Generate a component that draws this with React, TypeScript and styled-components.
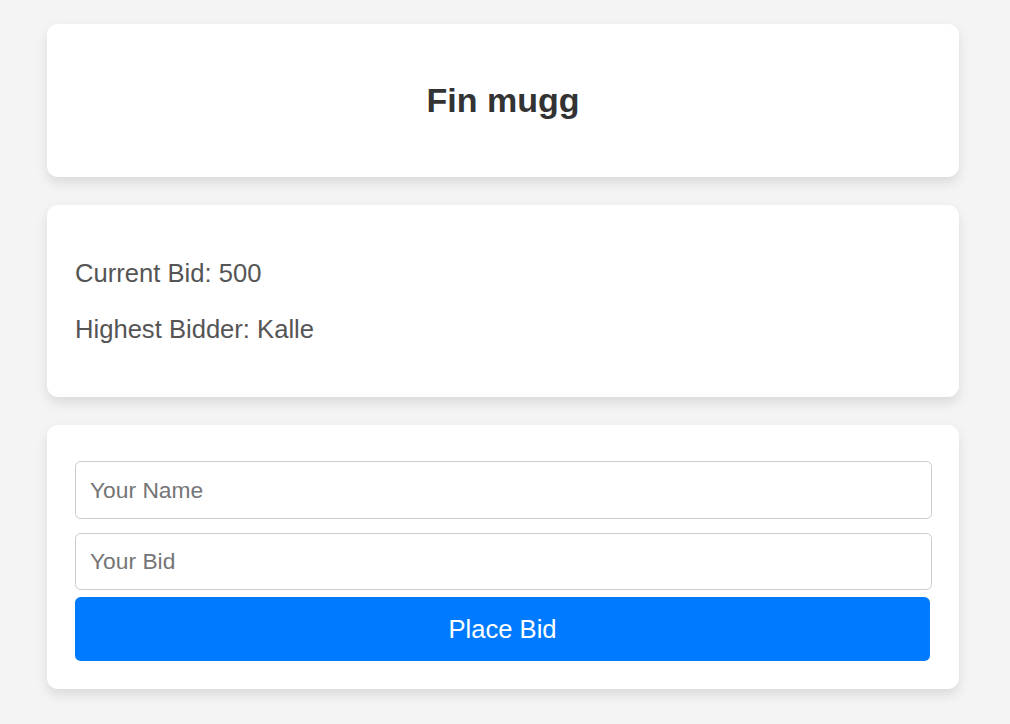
import React from "react";
import styled, { createGlobalStyle } from "styled-components";

const Global = createGlobalStyle`
  html, body { margin: 0; padding: 0; background: #f4f4f4; }
  body { font-family: "Liberation Sans", Arial, sans-serif; }
  * { box-sizing: border-box; }
`;

const Page = styled.div`
  width: 912px;
  margin-left: 47px;
  padding: 24px 0;
  display: flex;
  flex-direction: column;
  gap: 28px;
`;

const Card = styled.section`
  background: #fff;
  border-radius: 11.2px;
  box-shadow: 0 5.6px 11.2px rgba(0, 0, 0, 0.1);
  padding: 28px;
`;

const Title = styled.h2`
  margin: 28px 0;
  font-size: 34px;
  line-height: 41px;
  font-weight: bold;
  color: #333;
  text-align: center;
`;

const Info = styled.p`
  margin: 25.2px 0;
  font-size: 25.6px;
  line-height: 30.4px;
  color: #555;
`;

const Form = styled.form`
  display: flex;
  flex-direction: column;
  padding-top: 8px;
`;

const Input = styled.input<{ $h: number; $mb: number }>`
  width: 857px;
  height: ${(p) => p.$h}px;
  margin: 0 0 ${(p) => p.$mb}px 0;
  padding: 0 14px;
  font-family: "Liberation Sans", Arial, sans-serif;
  font-size: 22.8px;
  color: #333;
  border: 1.4px solid #ccc;
  border-radius: 5.6px;
  outline: none;
  &::placeholder { color: #757575; }
`;

const Button = styled.button`
  width: 855px;
  height: 64px;
  border: none;
  border-radius: 5.6px;
  background: #007bff;
  color: #fff;
  font-family: "Liberation Sans", Arial, sans-serif;
  font-size: 25.6px;
  cursor: pointer;
`;

export default function App() {
  return (
    <>
      <Global />
      <Page>
        <Card>
          <Title>Fin mugg</Title>
        </Card>
        <Card>
          <Info>Current Bid: 500</Info>
          <Info>Highest Bidder: Kalle</Info>
        </Card>
        <Card>
          <Form onSubmit={(e) => e.preventDefault()}>
            <Input $h={58} $mb={14} placeholder="Your Name" />
            <Input $h={57} $mb={7} placeholder="Your Bid" />
            <Button type="submit">Place Bid</Button>
          </Form>
        </Card>
      </Page>
    </>
  );
}
